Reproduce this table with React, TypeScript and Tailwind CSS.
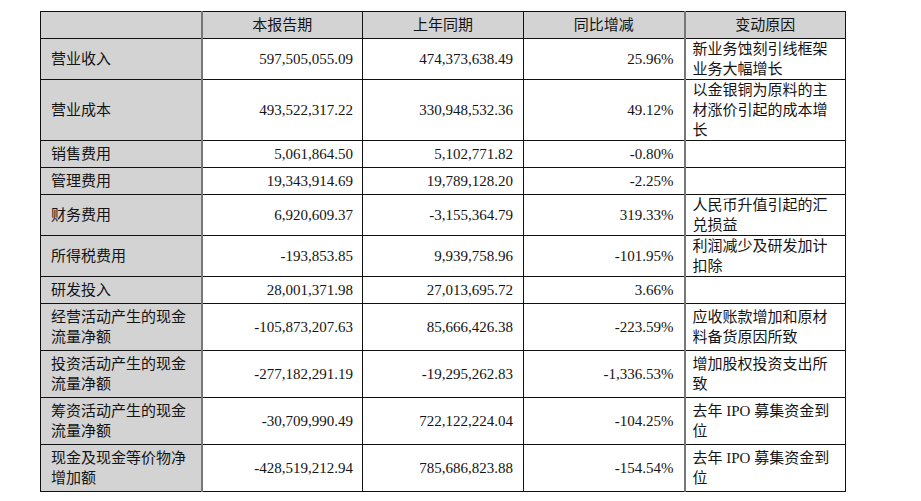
import React from "react";

type Row = { h: number; label: React.ReactNode; a: string; b: string; c: string; r: React.ReactNode };

const rows: Row[] = [
  { h: 40, label: "营业收入", a: "597,505,055.09", b: "474,373,638.49", c: "25.96%", r: <>新业务蚀刻引线框架<br />业务大幅增长</> },
  { h: 61, label: "营业成本", a: "493,522,317.22", b: "330,948,532.36", c: "49.12%", r: <>以金银铜为原料的主<br />材涨价引起的成本增<br />长</> },
  { h: 27, label: "销售费用", a: "5,061,864.50", b: "5,102,771.82", c: "-0.80%", r: "" },
  { h: 27, label: "管理费用", a: "19,343,914.69", b: "19,789,128.20", c: "-2.25%", r: "" },
  { h: 40, label: "财务费用", a: "6,920,609.37", b: "-3,155,364.79", c: "319.33%", r: <>人民币升值引起的汇<br />兑损益</> },
  { h: 41, label: "所得税费用", a: "-193,853.85", b: "9,939,758.96", c: "-101.95%", r: <>利润减少及研发加计<br />扣除</> },
  { h: 27, label: "研发投入", a: "28,001,371.98", b: "27,013,695.72", c: "3.66%", r: "" },
  { h: 47, label: <>经营活动产生的现金<br />流量净额</>, a: "-105,873,207.63", b: "85,666,426.38", c: "-223.59%", r: <>应收账款增加和原材<br />料备货原因所致</> },
  { h: 47, label: <>投资活动产生的现金<br />流量净额</>, a: "-277,182,291.19", b: "-19,295,262.83", c: "-1,336.53%", r: <>增加股权投资支出所<br />致</> },
  { h: 47, label: <>筹资活动产生的现金<br />流量净额</>, a: "-30,709,990.49", b: "722,122,224.04", c: "-104.25%", r: <>去年 IPO 募集资金到<br />位</> },
  { h: 47, label: <>现金及现金等价物净<br />增加额</>, a: "-428,519,212.94", b: "785,686,823.88", c: "-154.54%", r: <>去年 IPO 募集资金到<br />位</> },
];

export default function App() {
  return (
    <div className="w-[921px] h-[501px] bg-white overflow-hidden pt-[11px] pl-[40px]">
      <table
        className="border-collapse table-fixed w-[805px] text-[15px] leading-[20px] text-[#141414] border-[1.5px] border-[#222]"
        style={{ fontFamily: '"Liberation Serif", "Noto Sans CJK SC", serif' }}
      >
        <colgroup>
          <col className="w-[161px]" />
          <col className="w-[161px]" />
          <col className="w-[161px]" />
          <col className="w-[161px]" />
          <col className="w-[161px]" />
        </colgroup>
        <thead>
          <tr className="h-[27px] bg-[#d3d3d3]">
            <th className="border border-[#111] border-r-2 border-r-[#777] p-0 font-normal"></th>
            <th className="border border-[#111] p-0 font-normal text-center">本报告期</th>
            <th className="border border-[#111] p-0 font-normal text-center">上年同期</th>
            <th className="border border-[#111] p-0 font-normal text-center">同比增减</th>
            <th className="border border-[#111] border-l-2 border-l-[#777] p-0 font-normal text-center">变动原因</th>
          </tr>
        </thead>
        <tbody>
          {rows.map((row, i) => (
            <tr key={i} style={{ height: row.h }}>
              <td className="border border-[#111] border-r-2 border-r-[#777] bg-[#d3d3d3] py-0 pl-[10px] pr-0 align-middle">{row.label}</td>
              <td className="border border-[#111] py-0 pr-[9px] text-right align-middle">{row.a}</td>
              <td className="border border-[#111] py-0 pr-[10px] text-right align-middle">{row.b}</td>
              <td className="border border-[#111] py-0 pr-[10px] text-right align-middle">{row.c}</td>
              <td className="border border-[#111] border-l-2 border-l-[#777] py-0 pl-[7px] pr-0 align-middle">{row.r}</td>
            </tr>
          ))}
        </tbody>
      </table>
    </div>
  );
}
